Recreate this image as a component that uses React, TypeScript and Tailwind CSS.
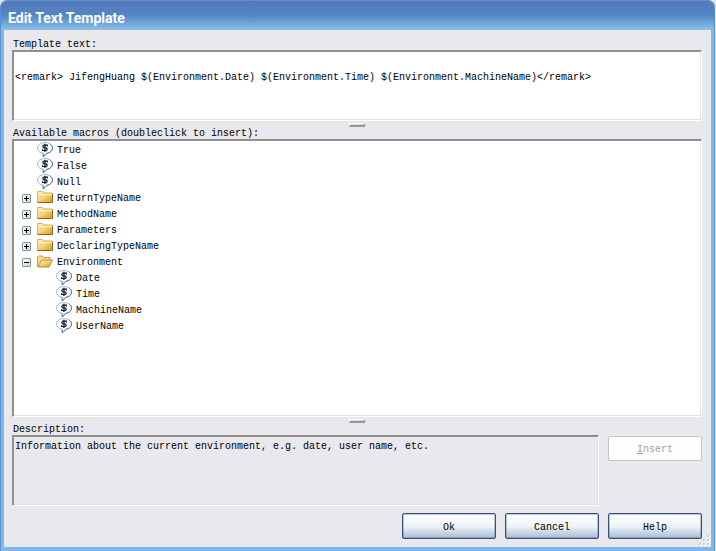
import { useState } from 'react';

const mono = 'font-["Liberation_Mono","DejaVu_Sans_Mono",monospace] text-[10px] text-black';
const sunken =
  'border border-t-[#8c8b90] border-l-[#8c8b90] border-r-white border-b-white shadow-[inset_1px_1px_0_#939297,inset_-1px_-1px_0_#e0dfe4]';
const label = 'block h-3 pl-px leading-[14px]';

function MacroIcon() {
  return (
    <svg className="h-4 w-4 shrink-0" viewBox="0 0 16 16" aria-hidden="true">
      <path
        d="M8 .5C3.700.5.5 2.800.5 6c0 2.800 2.400 4.900 5.700 5.300L6.300 15l3.600-3.700c3.300-.4 5.600-2.500 5.600-5.300C15.500 2.800 12.300.5 8 .5z"
        fill="#f7fbff"
        stroke="#a9b9ca"
      />
      <path
        d="M12.800 1.900c1.700.9 2.700 2.400 2.700 4.100 0 2.800-2.300 4.900-5.600 5.300L6.300 15l-.1-3.700"
        fill="none"
        stroke="#5c7a9c"
      />
      <path
        d="M10.300 4.500V3.200H7.200c-1.700 0-1.700 2.600 0 2.600h1.600c1.800 0 1.800 2.700 0 2.700H5.700V7.200M8 1.800v8.200"
        fill="none"
        stroke="#101820"
        strokeWidth="1.200"
      />
    </svg>
  );
}

function FolderIcon({ open }: { open: boolean }) {
  return (
    <svg className="h-4 w-4 shrink-0" viewBox="0 0 16 16" aria-hidden="true">
      <defs>
        <linearGradient id={open ? 'fo' : 'fc'} x1="0" y1="0" x2="1" y2="1">
          <stop offset="0" stopColor="#fff0b8" />
          <stop offset="0.500" stopColor="#f3d070" />
          <stop offset="1" stopColor="#d09a1c" />
        </linearGradient>
      </defs>
      {open ? (
        <>
          <path d="M.5 13V3l1-1h4L7 3.500h6V6" fill="#f7dc8c" stroke="#c09a44" />
          <path d="M1 13l3.500-7h11L12 13z" fill="url(#fo)" stroke="#bd9030" />
        </>
      ) : (
        <>
          <path d="M.5 12.500v-11h5L7 3h8.500v9.500z" fill="url(#fc)" stroke="#d5b468" />
          <path d="M.5 12.500h15V4" fill="none" stroke="#8a6a20" />
          <path d="M1.500 4.500H15" stroke="#fff3c4" />
        </>
      )}
    </svg>
  );
}

function Expander({ name, open, onToggle }: { name: string; open: boolean; onToggle: () => void }) {
  return (
    <button
      type="button"
      aria-label={name}
      aria-expanded={open}
      onClick={onToggle}
      className="flex h-[9px] w-[9px] items-center justify-center rounded-[1px] border border-[#8492a6] bg-linear-to-br from-white to-[#d4d2cc]"
    >
      <svg className="h-[5px] w-[5px]" viewBox="0 0 5 5" shapeRendering="crispEdges" aria-hidden="true">
        <path d={open ? 'M0 2h5v1H0z' : 'M0 2h2V0h1v2h2v1H3v2H2V3H0z'} fill="#000" />
      </svg>
    </button>
  );
}

type Macro = { name: string; folder?: boolean; children?: string[] };

const macros: Macro[] = [
  { name: 'True' },
  { name: 'False' },
  { name: 'Null' },
  { name: 'ReturnTypeName', folder: true },
  { name: 'MethodName', folder: true },
  { name: 'Parameters', folder: true },
  { name: 'DeclaringTypeName', folder: true },
  {
    name: 'Environment',
    folder: true,
    children: ['Date', 'Time', 'MachineName', 'UserName'],
  },
];

function MacroNode({ macro }: { macro: Macro }) {
  const [open, setOpen] = useState(Boolean(macro.children));
  return (
    <li>
      <div className="flex h-4 items-center">
        <span className="flex w-[15px]">
          {macro.folder && <Expander name={macro.name} open={open} onToggle={() => setOpen(!open)} />}
        </span>
        {macro.folder ? <FolderIcon open={open} /> : <MacroIcon />}
        <span className="pt-0.5 pl-1 leading-4">{macro.name}</span>
      </div>
      {open && macro.children && (
        <ul className="pl-[34px]">
          {macro.children.map((child) => (
            <li key={child} className="flex h-4 items-center">
              <MacroIcon />
              <span className="pt-0.5 pl-1 leading-4">{child}</span>
            </li>
          ))}
        </ul>
      )}
    </li>
  );
}

function Splitter() {
  return (
    <div className="flex h-[6px] items-end justify-center" role="separator">
      <div className="h-1 w-4 border-t border-r border-b-2 border-l border-t-white border-r-[#97969b] border-b-[#97969b] border-l-white bg-[#d8d7dc]" />
    </div>
  );
}

function DialogButton({ text }: { text: string }) {
  return (
    <button
      type="button"
      className="h-[26px] w-[94px] rounded-[2px] border border-[#34507d] bg-linear-to-b from-white via-[#f0f5f8] to-[#a9bcd4] pt-0.5 ring-1 ring-[#34507d]/30 ring-inset"
    >
      {text}
    </button>
  );
}

function Grip() {
  return (
    <svg className="absolute right-0 bottom-0 h-3 w-3" viewBox="0 0 12 12" shapeRendering="crispEdges" aria-hidden="true">
      <path d="M9 1h2v2H9zM5 5h2v2H5zM9 5h2v2H9zM1 9h2v2H1zM5 9h2v2H5zM9 9h2v2H9z" fill="#fff" />
      <path d="M8 0h2v2H8zM4 4h2v2H4zM8 4h2v2H8zM0 8h2v2H0zM4 8h2v2H4zM8 8h2v2H8z" fill="#d0cfd4" />
    </svg>
  );
}

export default function App() {
  return (
    <div className={`flex h-screen min-h-[400px] bg-[#dfe9f5] pr-px ${mono}`}>
      <main className="flex min-w-0 flex-1 flex-col overflow-hidden rounded-t-[7px] border border-b-0 border-[#5a8fd0] bg-[#82b6ee]">
        <header className="flex h-[29px] shrink-0 items-center bg-linear-to-b from-[#5579b8] from-5% via-[#5187c8] via-50% to-[#8fc0e8] pl-[7px] pt-1">
          <h1 className='font-["Roboto","Liberation_Sans",sans-serif] text-[14px] leading-4 font-bold text-white'>
            Edit Text Template
          </h1>
        </header>
        <div className="relative mx-[3px] mb-1 flex min-h-0 flex-1 flex-col bg-[#e9e8ed] pt-2 pr-[9px] pb-2 pl-2">
          <label htmlFor="template" className={label}>
            Template text:
          </label>
          <textarea
            id="template"
            spellCheck={false}
            defaultValue={
              '\n<remark> JifengHuang $(Environment.Date) $(Environment.Time) $(Environment.MachineName)</remark>'
            }
            className={`block h-[71px] shrink-0 resize-none overflow-hidden bg-white px-0.5 pt-[3px] leading-4 outline-none ${sunken}`}
          />
          <Splitter />
          <h2 id="macros" className={label}>
            Available macros (doubleclick to insert):
          </h2>
          <ul
            aria-labelledby="macros"
            className={`min-h-0 flex-1 overflow-hidden bg-white pt-0.5 pl-[9px] ${sunken}`}
          >
            {macros.map((macro) => (
              <MacroNode key={macro.name} macro={macro} />
            ))}
          </ul>
          <Splitter />
          <h2 className={label}>Description:</h2>
          <div className="flex gap-[9px]">
            <p className={`h-[71px] flex-1 px-0.5 pt-[3px] leading-4 ${sunken}`}>
              Information about the current environment, e.g. date, user name, etc.
            </p>
            <button
              type="button"
              disabled
              className="mt-px h-[25px] w-[94px] rounded-[2px] border border-[#c4c3c8] bg-[#fdfdfd] pt-0.5 text-[#a3a2a7]"
            >
              <span className="underline">I</span>nsert
            </button>
          </div>
          <div className="mt-[7px] flex justify-end gap-[9px]">
            <DialogButton text="Ok" />
            <DialogButton text="Cancel" />
            <DialogButton text="Help" />
          </div>
          <Grip />
        </div>
      </main>
    </div>
  );
}
